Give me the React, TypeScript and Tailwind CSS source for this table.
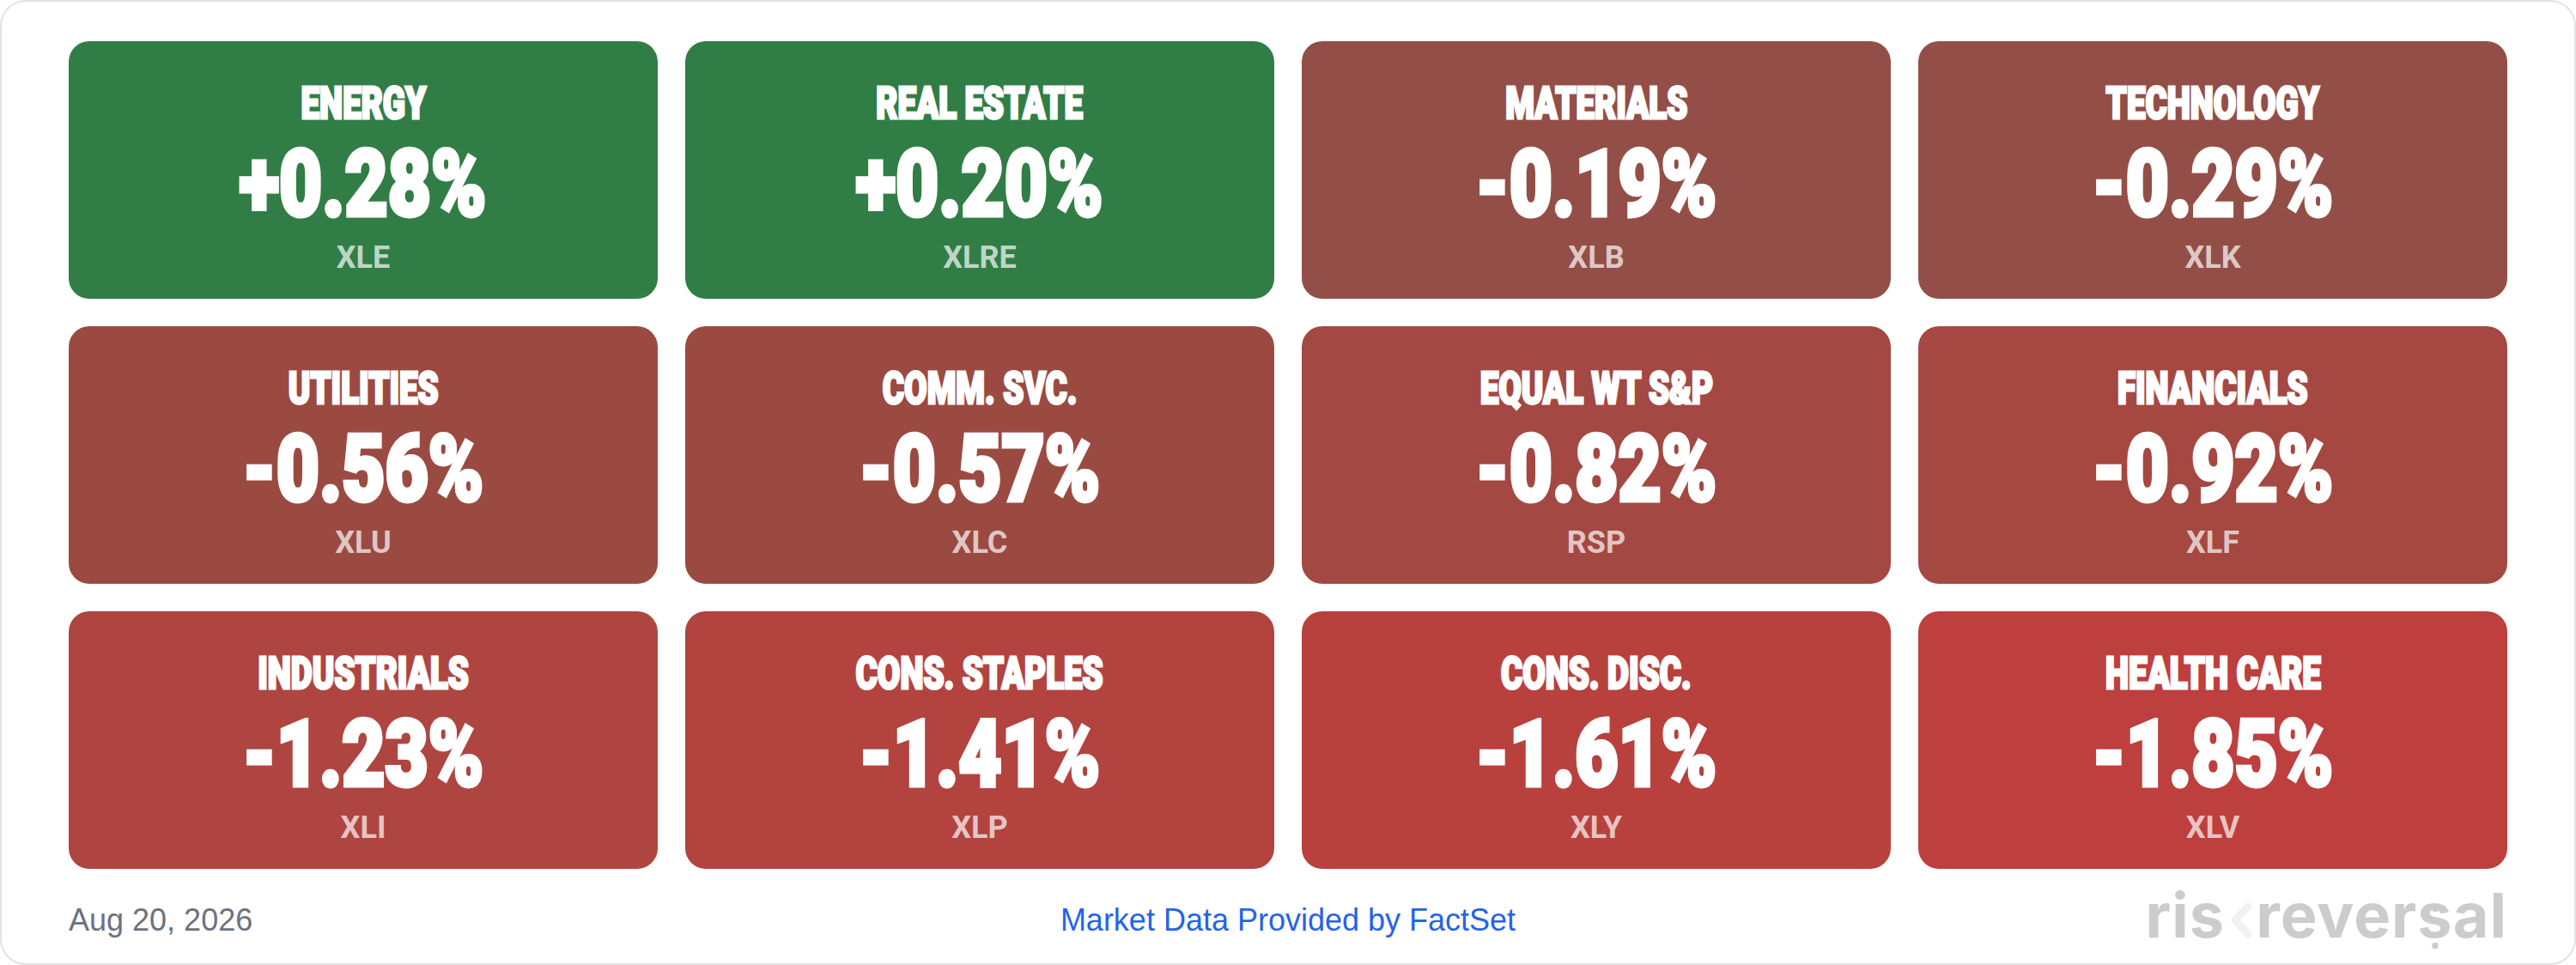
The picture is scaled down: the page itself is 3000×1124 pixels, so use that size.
import React from "react";

type Sector = {
  name: string;
  change: string;
  ticker: string;
  bg: string;
};

// sector heat map, sorted best to worst
const SECTORS: Sector[] = [
  { name: "ENERGY", change: "+0.28%", ticker: "XLE", bg: "bg-[#307e46]" },
  { name: "REAL ESTATE", change: "+0.20%", ticker: "XLRE", bg: "bg-[#307e46]" },
  { name: "MATERIALS", change: "-0.19%", ticker: "XLB", bg: "bg-[#934f47]" },
  { name: "TECHNOLOGY", change: "-0.29%", ticker: "XLK", bg: "bg-[#934f47]" },
  { name: "UTILITIES", change: "-0.56%", ticker: "XLU", bg: "bg-[#9b4a42]" },
  { name: "COMM. SVC.", change: "-0.57%", ticker: "XLC", bg: "bg-[#9b4a42]" },
  { name: "EQUAL WT S&P", change: "-0.82%", ticker: "RSP", bg: "bg-[#a34842]" },
  { name: "FINANCIALS", change: "-0.92%", ticker: "XLF", bg: "bg-[#a54841]" },
  { name: "INDUSTRIALS", change: "-1.23%", ticker: "XLI", bg: "bg-[#af4540]" },
  { name: "CONS. STAPLES", change: "-1.41%", ticker: "XLP", bg: "bg-[#b2433f]" },
  { name: "CONS. DISC.", change: "-1.61%", ticker: "XLY", bg: "bg-[#b8413e]" },
  { name: "HEALTH CARE", change: "-1.85%", ticker: "XLV", bg: "bg-[#bd3f3e]" },
];

function SectorCard({ name, change, ticker, bg }: Sector) {
  return (
    <div
      className={`${bg} h-[300px] rounded-[24px] flex flex-col items-center pt-[47px] text-white font-['Roboto',sans-serif]`}
    >
      {/* condensed display type: heavy face squeezed horizontally */}
      <div className="text-[52px] leading-none font-black whitespace-nowrap scale-x-[0.74] [-webkit-text-stroke:3px_white]">
        {name}
      </div>
      <div className="mt-[14px] text-[107px] leading-none font-black whitespace-nowrap scale-x-[0.81] [-webkit-text-stroke:5px_white]">
        {change}
      </div>
      <div className="mt-[14px] text-[36px] leading-none font-bold text-white/70">
        {ticker}
      </div>
    </div>
  );
}

function Logo() {
  return (
    <div className="flex items-baseline text-[72px] leading-none font-bold tracking-[1px] text-[#cccccc] font-['Inter',sans-serif]">
      <span>ris</span>
      <svg viewBox="0 0 30 40" className="w-[30px] h-[40px] mx-[3px]">
        <polyline
          points="24,4 9,20 24,36"
          fill="none"
          stroke="#f1f1f1"
          strokeWidth="9"
          strokeLinecap="round"
          strokeLinejoin="round"
        />
      </svg>
      <span>rever</span>
      <span className="relative">
        s
        <span className="absolute left-1/2 -translate-x-1/2 top-[25px] w-[7px] h-[7px] rounded-[2px] bg-[#cccccc]" />
        <span className="absolute left-1/2 -translate-x-1/2 top-[68px] w-[7px] h-[7px] rounded-[2px] bg-[#cccccc]" />
      </span>
      <span>al</span>
    </div>
  );
}

export default function App() {
  return (
    <div className="w-[3000px] h-[1124px] bg-white border-2 border-[#e2e2e2] rounded-[30px] pt-[46px] overflow-hidden">
      <div className="grid grid-cols-4 gap-x-[32px] gap-y-[32px] px-[78px]">
        {SECTORS.map((s) => (
          <SectorCard key={s.ticker} {...s} />
        ))}
      </div>

      {/* footer */}
      <div className="grid grid-cols-3 px-[78px]">
        <div className="pt-[42px] text-[36px] leading-none text-[#6b7280] font-['Liberation_Sans',Arial,sans-serif]">
          Aug 20, 2026
        </div>
        <div className="pt-[42px] text-center text-[36px] leading-none text-[#2563eb] font-['Liberation_Sans',Arial,sans-serif] whitespace-nowrap">
          Market Data Provided by FactSet
        </div>
        <div className="flex justify-end pt-[18px]">
          <Logo />
        </div>
      </div>
    </div>
  );
}
